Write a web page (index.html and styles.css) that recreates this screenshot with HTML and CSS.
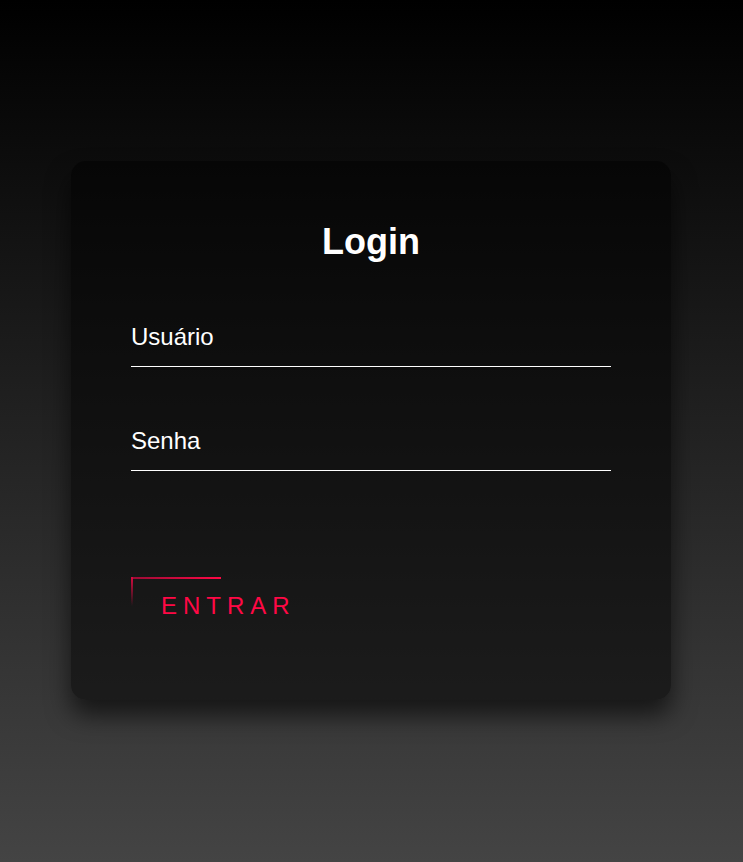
FILE: index.html
```html
<!DOCTYPE html>
<html lang="pt-BR">
<head>
<meta charset="utf-8">
<title>Login</title>
<link rel="stylesheet" href="styles.css">
</head>
<body>
  <div class="login-box">
    <h2 class="title">Login</h2>
    <form class="form">
      <div class="user-box"><label class="label">Usuário</label></div>
      <div class="user-box"><label class="label">Senha</label></div>
      <a class="btn" href="#">
        <span class="line-top"></span>
        <span class="line-left"></span>
        ENTRAR
      </a>
    </form>
  </div>
</body>
</html>
```
FILE: styles.css
```css
html, body {
  margin: 0;
  padding: 0;
}
body {
  min-height: 862px;
  box-sizing: border-box;
  padding: 161px 0 0 71px;
  background: linear-gradient(#000000, #444444);
  font-family: "Liberation Sans", Arial, sans-serif;
}
.login-box {
  width: 480px;
  padding: 60px 60px 65px;
  background: rgba(0, 0, 0, 0.5);
  box-shadow: 0 15px 25px rgba(0, 0, 0, 0.6);
  border-radius: 15px;
  box-sizing: content-box;
}
.title {
  margin: 0 0 45px;
  padding: 0;
  color: #fff;
  text-align: center;
  font-size: 36px;
  line-height: 42px;
  font-weight: bold;
}
.form {
  display: flex;
  flex-direction: column;
  align-items: flex-start;
}
.user-box {
  align-self: stretch;
  padding: 15px 0;
  border-bottom: 1px solid #fff;
  margin-bottom: 45px;
}
.user-box:last-of-type {
  margin-bottom: 0;
}
.label {
  display: block;
  color: #fff;
  font-size: 24px;
  line-height: 28px;
}
.btn {
  position: relative;
  display: inline-block;
  margin-top: 106px;
  padding: 15px 30px;
  color: #ff0845;
  font-size: 24px;
  line-height: 28px;
  letter-spacing: 6px;
  text-decoration: none;
  text-transform: uppercase;
}
.line-top {
  position: absolute;
  top: 0;
  left: 0;
  width: 90px;
  height: 2px;
  background: linear-gradient(90deg, #9a0c35, #ff0845);
}
.line-left {
  position: absolute;
  top: 0;
  left: 0;
  width: 2px;
  height: 29px;
  background: linear-gradient(180deg, #d80a40, rgba(255, 8, 69, 0));
}
```
